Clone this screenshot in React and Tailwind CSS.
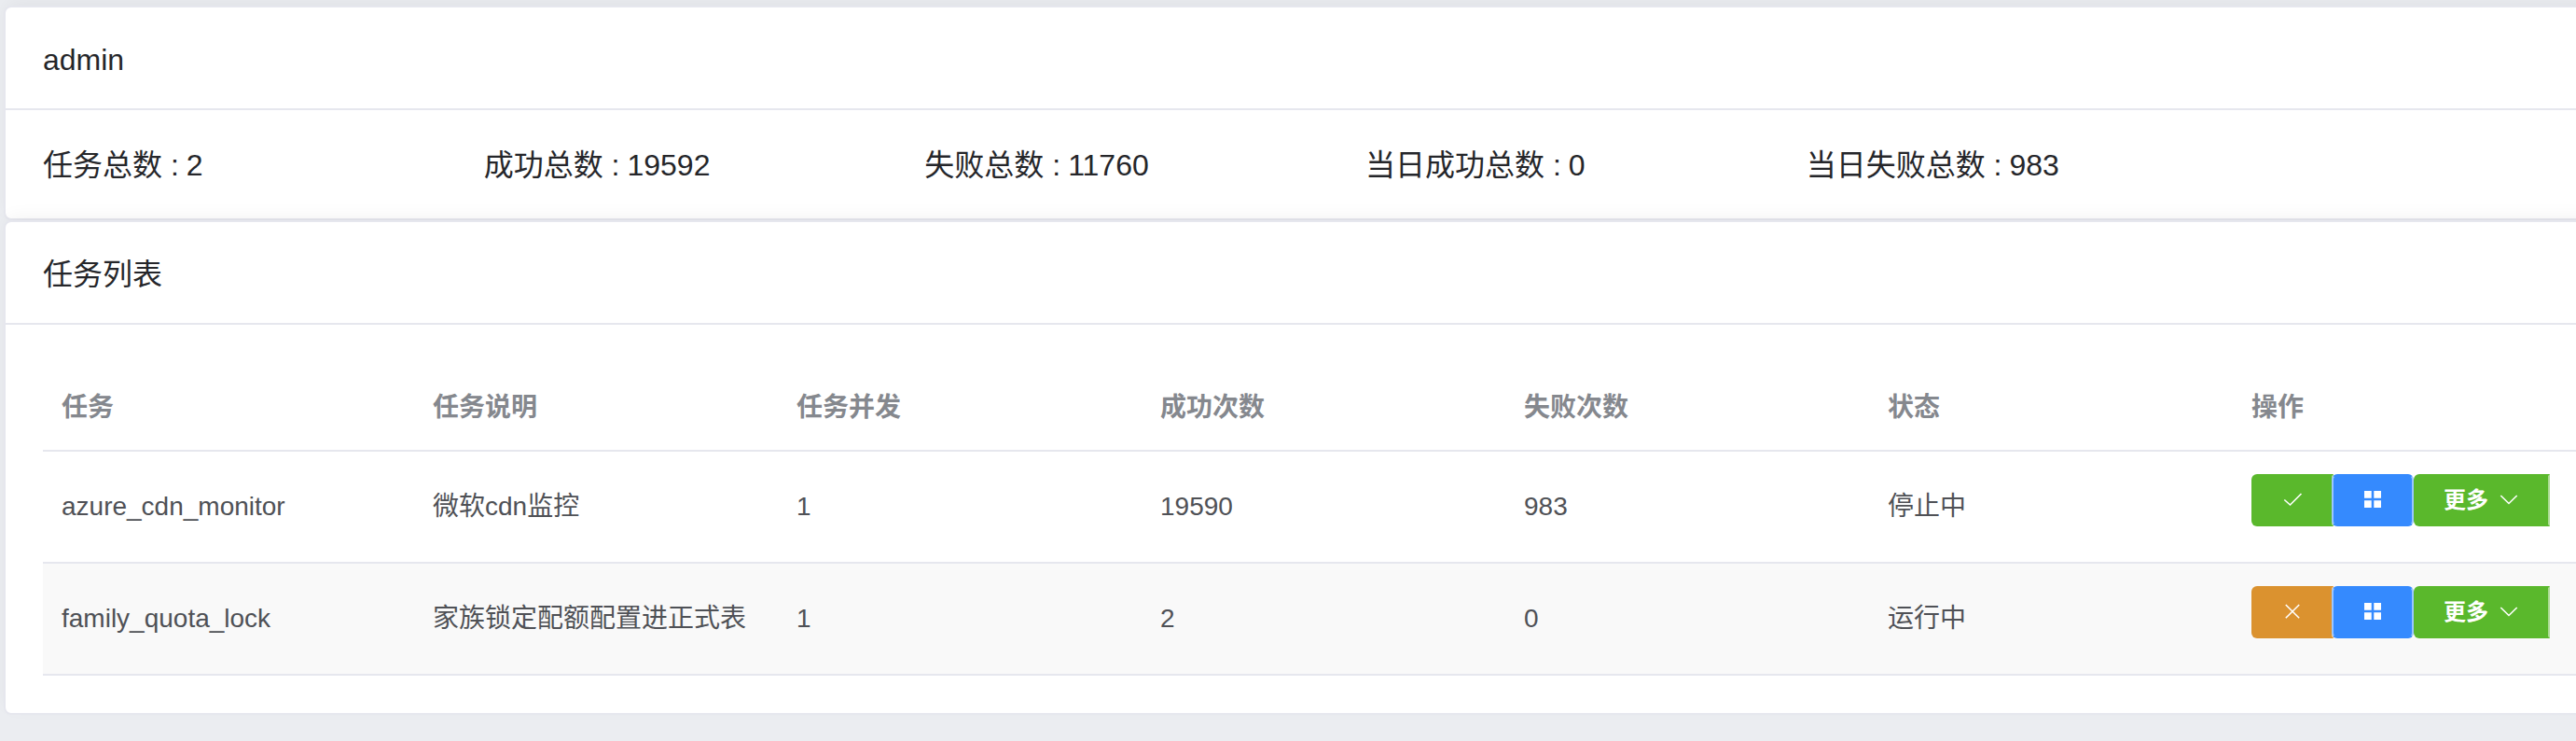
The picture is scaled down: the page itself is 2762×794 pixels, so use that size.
const FONT = "font-['Liberation_Sans','Noto_Sans_CJK_SC',sans-serif]";

const stats = [
  ['任务总数', '2'],
  ['成功总数', '19592'],
  ['失败总数', '11760'],
  ['当日成功总数', '0'],
  ['当日失败总数', '983'],
];

const columns = ['任务', '任务说明', '任务并发', '成功次数', '失败次数', '状态', '操作'];

const tasks = [
  { cells: ['azure_cdn_monitor', '微软cdn监控', '1', '19590', '983', '停止中'], running: false },
  { cells: ['family_quota_lock', '家族锁定配额配置进正式表', '1', '2', '0', '运行中'], running: true },
];

function CheckIcon() {
  return (
    <svg viewBox="0 0 24 24" className="size-6" fill="none" stroke="currentColor" strokeWidth="1.6">
      <path d="M3.300 11.500 9.500 17 21.500 5" />
    </svg>
  );
}

function CloseIcon() {
  return (
    <svg viewBox="0 0 24 24" className="size-6" fill="none" stroke="currentColor" strokeWidth="1.6">
      <path d="M4.800 4 19.200 18.200M19.200 4 4.800 18.200" />
    </svg>
  );
}

function GridIcon() {
  return (
    <svg viewBox="0 0 24 24" className="size-6" fill="currentColor">
      <path d="M3 2h7.700v7.700H3zM13.300 2H21v7.700h-7.700zM3 12.300h7.700V20H3zM13.300 12.300H21V20h-7.700z" />
    </svg>
  );
}

function ArrowDownIcon() {
  return (
    <svg viewBox="0 0 24 24" className="size-6" fill="none" stroke="currentColor" strokeWidth="1.6">
      <path d="m3.300 7 8.700 8.500L20.700 7" />
    </svg>
  );
}

function Actions({ running }) {
  return (
    <div className="flex pb-3.5 text-2xl leading-6 font-bold text-white">
      <button
        type="button"
        aria-label={running ? '停止' : '启动'}
        className={`flex h-14 items-center rounded-l-md border-2 border-r-white/50 px-[30px] ${
          running ? 'border-[#db922f] bg-[#db922f]' : 'border-[#5ab82c] bg-[#5ab82c]'
        }`}
      >
        {running ? <CloseIcon /> : <CheckIcon />}
      </button>
      <button
        type="button"
        aria-label="详情"
        className="-ml-0.5 flex h-14 items-center rounded-md border-2 border-[#358afe] border-x-white/50 bg-[#358afe] px-[30px]"
      >
        <GridIcon />
      </button>
      <button
        type="button"
        className="flex h-14 items-center gap-2.5 rounded-l-md border-2 border-[#5ab82c] border-r-white/50 bg-[#5ab82c] px-[30px]"
      >
        更多
        <ArrowDownIcon />
      </button>
    </div>
  );
}

function Card({ title, children }) {
  return (
    <section className="rounded-lg border-2 border-[#e6e7ee] bg-white shadow-[0_-6px_20px_-4px_rgba(0,0,0,0.06)]">
      <h2 className="border-b-2 border-[#e6e7ee] px-10 pt-[38px] pb-[34px] text-[32px] leading-9">{title}</h2>
      <div className="p-10">{children}</div>
    </section>
  );
}

export default function App() {
  return (
    <div className={`min-h-screen overflow-hidden bg-[#ebedf1] text-[#25262a] ${FONT}`}>
      <main className="-mr-[162px] pt-1.5 pl-1">
        <Card title="admin">
          <dl className="grid grid-cols-6 pt-0.5 text-[32px] leading-[34px]">
            {stats.map(([label, value]) => (
              <div key={label} className="flex gap-2">
                <dt>{label} :</dt>
                <dd>{value}</dd>
              </div>
            ))}
          </dl>
        </Card>
        <Card title="任务列表">
          <table className="w-full table-fixed border-collapse text-left text-[28px] leading-[46px] text-[#4f5156]">
            <colgroup>
              <col className="w-[398px]" />
              <col className="w-[390px]" />
              <col className="w-[390px]" />
              <col className="w-[390px]" />
              <col className="w-[390px]" />
              <col className="w-[390px]" />
              <col />
            </colgroup>
            <thead className="text-[#85888e]">
              <tr className="h-24 shadow-[inset_0_-2px_0_#e6e7ee]">
                {columns.map((name) => (
                  <th key={name} className="px-5 pt-0.5 font-bold">{name}</th>
                ))}
              </tr>
            </thead>
            <tbody>
              {tasks.map(({ cells, running }) => (
                <tr
                  key={cells[0]}
                  className="h-[120px] shadow-[inset_0_-2px_0_#e6e7ee] even:bg-[#f9f9f9]"
                >
                  {cells.map((cell, i) => (
                    <td key={i} className="px-5 pb-0.5 whitespace-nowrap">{cell}</td>
                  ))}
                  <td className="px-5 pb-0.5">
                    <Actions running={running} />
                  </td>
                </tr>
              ))}
            </tbody>
          </table>
        </Card>
      </main>
    </div>
  );
}
